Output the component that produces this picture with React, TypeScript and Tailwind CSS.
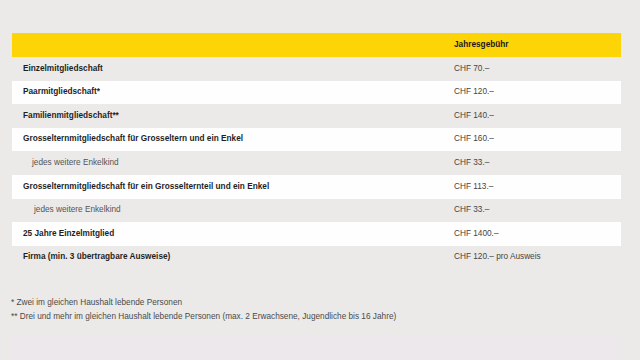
const rows = [
  { label: 'Einzelmitgliedschaft', price: 'CHF 70.–', white: false },
  { label: 'Paarmitgliedschaft*', price: 'CHF 120.–', white: true },
  { label: 'Familienmitgliedschaft**', price: 'CHF 140.–', white: false },
  { label: 'Grosselternmitgliedschaft für Grosseltern und ein Enkel', price: 'CHF 160.–', white: true },
  { label: 'jedes weitere Enkelkind', price: 'CHF 33.–', white: false, sub: 'pl-[20px]' },
  { label: 'Grosselternmitgliedschaft für ein Grosselternteil und ein Enkel', price: 'CHF 113.–', white: true },
  { label: 'jedes weitere Enkelkind', price: 'CHF 33.–', white: false, sub: 'pl-[22px]' },
  { label: '25 Jahre Einzelmitglied', price: 'CHF 1400.–', white: true },
  { label: 'Firma (min. 3 übertragbare Ausweise)', price: 'CHF 120.– pro Ausweis', white: false },
];

export default function App() {
  return (
    <main className="w-[640px] h-[360px] overflow-hidden bg-[#ebeae9] font-['Liberation_Sans',Arial,sans-serif] text-[8.25px]">
      <div className="pt-[33px] pl-[12px] w-[621px]">
        <div className="flex items-center h-[24px] bg-[#fdd507]">
          <div className="w-[442px]" />
          <div className="font-bold text-[#1a1a1a]">Jahresgebühr</div>
        </div>
        {rows.map((r, i) => (
          <div
            key={i}
            className={`flex items-center h-[23.6px] ${r.white ? 'bg-[#fefefe]' : 'bg-[#ebeae9]'}`}
          >
            <div
              className={`w-[442px] ${r.sub ? `${r.sub} text-[#555] font-normal` : 'pl-[11px] font-bold text-[#1f1f1f]'}`}
            >
              {r.label}
            </div>
            <div className="text-[#454545]">{r.price}</div>
          </div>
        ))}
      </div>
      <div className="pl-[11px] pt-[27px] text-[#4a4a4a] leading-[14px]">
        <p>* Zwei im gleichen Haushalt lebende Personen</p>
        <p>** Drei und mehr im gleichen Haushalt lebende Personen (max. 2 Erwachsene, Jugendliche bis 16 Jahre)</p>
      </div>
      <div className="mt-[12px] ml-[12px] w-[606px] h-[30px] bg-[#ece8ec]" />
    </main>
  );
}
